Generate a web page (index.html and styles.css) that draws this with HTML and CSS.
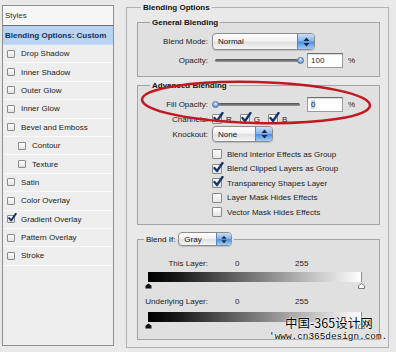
FILE: index.html
```html
<!DOCTYPE html>
<html lang="en">
<head>
    <meta charset="UTF-8">
    <meta name="viewport" content="width=device-width, initial-scale=1.0">
    <title>Layer Style</title>
    <link rel="stylesheet" href="styles.css">
</head>
<body>

<div class="window">
    <!-- daftar style di kiri -->
    <div class="styles-panel">
        <div class="styles-head">Styles</div>
        <div class="styles-item active">Blending Options: Custom</div>
        <div class="styles-item"><span class="cb"></span>Drop Shadow</div>
        <div class="styles-item"><span class="cb"></span>Inner Shadow</div>
        <div class="styles-item"><span class="cb"></span>Outer Glow</div>
        <div class="styles-item"><span class="cb"></span>Inner Glow</div>
        <div class="styles-item"><span class="cb"></span>Bevel and Emboss</div>
        <div class="styles-item sub"><span class="cb"></span>Contour</div>
        <div class="styles-item sub"><span class="cb"></span>Texture</div>
        <div class="styles-item"><span class="cb"></span>Satin</div>
        <div class="styles-item"><span class="cb"></span>Color Overlay</div>
        <div class="styles-item"><span class="cb on"><svg class="tick" width="10" height="10" viewBox="0 0 12 12"><path d="M2.5 6 L5 9 L10.5 1" /></svg></span>Gradient Overlay</div>
        <div class="styles-item"><span class="cb"></span>Pattern Overlay</div>
        <div class="styles-item"><span class="cb"></span>Stroke</div>
    </div>

    <!-- panel blending options -->
    <fieldset class="box outer">
        <legend>Blending Options</legend>

        <fieldset class="box group general">
            <legend>General Blending</legend>
            <div class="row">
                <span class="lbl">Blend Mode:</span>
                <div class="popup popup-mode">
                    <span class="popup-text">Normal</span>
                    <span class="popup-arrows"><svg width="7" height="10" viewBox="0 0 7 10"><path d="M0.5 4 L3.5 0.5 L6.5 4 Z M0.5 6 L3.5 9.5 L6.5 6 Z" /></svg></span>
                </div>
            </div>
            <div class="row">
                <span class="lbl">Opacity:</span>
                <div class="slider full">
                    <span class="track"></span><span class="knob"></span>
                </div>
                <div class="num">100</div>
                <span class="pct">%</span>
            </div>
        </fieldset>

        <fieldset class="box group advanced">
            <legend>Advanced Blending</legend>
            <div class="row fill-row">
                <span class="lbl">Fill Opacity:</span>
                <div class="slider empty">
                    <span class="knob"></span><span class="track"></span>
                </div>
                <div class="num"><span class="sel">0</span></div>
                <span class="pct">%</span>
            </div>
            <div class="row chan-row">
                <span class="lbl">Channels:</span>
                <span class="chan"><span class="cbx"><svg class="tick" width="12" height="12" viewBox="0 0 12 12"><path d="M2.5 6 L5 9 L10.5 1" /></svg></span>R</span>
                <span class="chan"><span class="cbx"><svg class="tick" width="12" height="12" viewBox="0 0 12 12"><path d="M2.5 6 L5 9 L10.5 1" /></svg></span>G</span>
                <span class="chan"><span class="cbx"><svg class="tick" width="12" height="12" viewBox="0 0 12 12"><path d="M2.5 6 L5 9 L10.5 1" /></svg></span>B</span>
            </div>
            <div class="row knock-row">
                <span class="lbl">Knockout:</span>
                <div class="popup popup-knock">
                    <span class="popup-text">None</span>
                    <span class="popup-arrows"><svg width="7" height="10" viewBox="0 0 7 10"><path d="M0.5 4 L3.5 0.5 L6.5 4 Z M0.5 6 L3.5 9.5 L6.5 6 Z" /></svg></span>
                </div>
            </div>
            <div class="checks">
                <div class="check-row"><span class="cbx"></span>Blend Interior Effects as Group</div>
                <div class="check-row"><span class="cbx"><svg class="tick" width="12" height="12" viewBox="0 0 12 12"><path d="M2.5 6 L5 9 L10.5 1" /></svg></span>Blend Clipped Layers as Group</div>
                <div class="check-row"><span class="cbx"><svg class="tick" width="12" height="12" viewBox="0 0 12 12"><path d="M2.5 6 L5 9 L10.5 1" /></svg></span>Transparency Shapes Layer</div>
                <div class="check-row"><span class="cbx"></span>Layer Mask Hides Effects</div>
                <div class="check-row"><span class="cbx"></span>Vector Mask Hides Effects</div>
            </div>
        </fieldset>

        <fieldset class="box group blendif">
            <legend>
                <span class="legend-row">
                    <span class="legend-lbl">Blend If:</span>
                    <span class="popup popup-gray">
                        <span class="popup-text">Gray</span>
                        <span class="popup-arrows"><svg width="6" height="9" viewBox="0 0 7 10"><path d="M0.5 4 L3.5 0.5 L6.5 4 Z M0.5 6 L3.5 9.5 L6.5 6 Z" /></svg></span>
                    </span>
                </span>
            </legend>
            <div class="layer-row">
                <span class="lbl">This Layer:</span>
                <span class="v-lo">0</span>
                <span class="v-hi">255</span>
            </div>
            <div class="ramp">
                <div class="ramp-bar"></div>
                <div class="ramp-thumbs">
                    <svg width="7" height="6" viewBox="0 0 7 6"><path class="th-dark" d="M0.5 5.5 V2.8 L3.5 0.5 L6.5 2.8 V5.5 Z" /></svg>
                    <svg width="7" height="6" viewBox="0 0 7 6"><path class="th-light" d="M0.5 5.5 V2.8 L3.5 0.5 L6.5 2.8 V5.5 Z" /></svg>
                </div>
            </div>
            <div class="layer-row under">
                <span class="lbl">Underlying Layer:</span>
                <span class="v-lo">0</span>
                <span class="v-hi">255</span>
            </div>
            <div class="ramp">
                <div class="ramp-bar"></div>
                <div class="ramp-thumbs">
                    <svg width="7" height="6" viewBox="0 0 7 6"><path class="th-dark" d="M0.5 5.5 V2.8 L3.5 0.5 L6.5 2.8 V5.5 Z" /></svg>
                    <svg width="7" height="6" viewBox="0 0 7 6"><path class="th-light" d="M0.5 5.5 V2.8 L3.5 0.5 L6.5 2.8 V5.5 Z" /></svg>
                </div>
            </div>
        </fieldset>
    </fieldset>
</div>

<!-- lingkaran merah penanda -->
<svg class="mark" width="396" height="352" viewBox="0 0 396 352">
    <ellipse cx="256" cy="102.5" rx="114" ry="20.5" transform="rotate(1.5 256 102.5)" />
</svg>

<div class="watermark">
    <div class="wm-cn">中国-365设计网</div>
    <div class="wm-url">'www.cn365design.com.</div>
</div>

</body>
</html>
```

FILE: styles.css
```css
* {
    box-sizing: border-box;
}
html, body {
    margin: 0;
}
body {
    position: relative;
    width: 396px;
    height: 352px;
    overflow: hidden;
    background-color: #e9e9e9;
    font-family: "Liberation Sans", Arial, sans-serif;
    font-size: 8px;
    color: #1c1c1c;
}
.window {
    display: flex;
    align-items: flex-start;
    padding: 2px 0 0 2px;
}

/* panel kiri */
.styles-panel {
    width: 112px;
    height: 341px;
    margin-top: 3px;
    border: 1px solid #8e8e8e;
    background-color: #eeeeee;
}
.styles-head {
    height: 20px;
    line-height: 19px;
    padding-left: 2px;
    background-color: #f7f7f7;
    border-bottom: 1px solid #6f6f6f;
    color: #333;
}
.styles-item {
    display: flex;
    align-items: center;
    height: 18.4px;
    padding-left: 4px;
    border-bottom: 1px solid #f9f9f9;
    color: #222;
}
.styles-item.active {
    height: 19px;
    padding-left: 2px;
    background-color: #b9d4f2;
    border-bottom: 1px solid #c9def5;
    font-weight: bold;
    color: #13305c;
}
.styles-item.sub {
    padding-left: 15px;
}
.cb {
    position: relative;
    flex: none;
    width: 8px;
    height: 8px;
    margin-right: 6px;
    border: 1px solid #8b8b8b;
    border-radius: 1px;
    background: linear-gradient(#ffffff, #e2e2e2);
}
.cb .tick {
    position: absolute;
    left: -1px;
    top: -3px;
}
.tick path {
    fill: none;
    stroke: #17356c;
    stroke-width: 2.3;
    stroke-linecap: round;
    stroke-linejoin: round;
}

/* group box */
.box {
    margin: 0;
    min-inline-size: 0;
    border: 1px solid #b2b2b2;
}
.box > legend {
    padding: 0 2px;
    line-height: 11px;
    font-weight: bold;
    color: #111;
}
.outer {
    width: 263px;
    margin-left: 12px;
    padding: 4px 8px 7px 10px;
}
.outer > legend {
    margin-left: 4px;
}
.group {
    padding: 0;
    border-color: #a4a4a4;
    background-color: rgba(0, 0, 0, 0.035);
}
.group > legend {
    margin-left: 12px;
}
.general {
    padding: 4px 0 6px;
}
.advanced {
    margin-top: 3px;
    padding: 5px 0 4.5px;
}
.blendif {
    margin-top: 7px;
    padding: 11px 0 9px;
}
.blendif > legend {
    margin-left: 6px;
    font-weight: normal;
}

.row {
    display: flex;
    align-items: center;
    height: 19px;
}
.lbl {
    flex: none;
    width: 70px;
    margin-right: 4px;
    text-align: right;
}

/* popup menu */
.popup {
    display: flex;
    align-items: center;
    height: 17px;
    border: 1px solid #8c8c8c;
    border-radius: 4px;
    background: linear-gradient(#ffffff, #f2f2f2 45%, #e0e0e0 55%, #f5f5f5);
    box-shadow: 0 1px 1px rgba(0, 0, 0, 0.15);
    overflow: hidden;
    font-weight: normal;
}
.popup-text {
    flex: 1;
    padding-left: 5px;
    color: #111;
}
.popup-arrows {
    display: flex;
    align-items: center;
    justify-content: center;
    align-self: stretch;
    width: 17px;
    border-left: 1px solid #5f84b8;
    background: linear-gradient(#c8dffa, #84b3ec 48%, #4c8ee0 52%, #a0ccf7);
}
.popup-arrows path {
    fill: #1b2944;
}
.popup-mode {
    width: 103px;
}
.popup-knock {
    width: 61px;
    height: 16px;
}
.popup-gray {
    width: 54px;
    height: 14px;
}
.popup-gray .popup-arrows {
    width: 15px;
}

/* slider */
.slider {
    display: flex;
    align-items: center;
    width: 92px;
    height: 9px;
}
.slider.full {
    padding-left: 3px;
}
.slider.empty {
    padding-right: 4px;
}
.track {
    flex: 1;
    height: 3px;
    border-radius: 2px;
    background: linear-gradient(#505050, #9a9a9a);
}
.knob {
    flex: none;
    width: 7px;
    height: 7px;
    border: 1px solid #4f6f9c;
    border-radius: 50%;
    background: radial-gradient(circle at 50% 30%, #eef5ff, #75aaea 60%, #3f78c2);
}
.full .knob {
    margin-left: -1px;
}
.empty .knob {
    margin-right: -1px;
}
.num {
    width: 36px;
    height: 15px;
    margin-left: 3px;
    padding-left: 3px;
    line-height: 13px;
    border: 1px solid #9a9a9a;
    border-top-color: #6d6d6d;
    background-color: #fff;
    box-shadow: inset 0 1px 1px rgba(0, 0, 0, 0.15);
}
.sel {
    background-color: #b6d6fd;
}
.pct {
    margin-left: 5px;
}
.fill-row {
    height: 17px;
}

/* checkbox kanan */
.cbx {
    position: relative;
    flex: none;
    width: 10px;
    height: 10px;
    border: 1px solid #8a8a8a;
    border-radius: 1px;
    background: linear-gradient(#ffffff, #e4e4e4);
}
.cbx .tick {
    position: absolute;
    left: -1px;
    top: -3px;
}
.chan-row {
    height: 12px;
}
.chan {
    display: flex;
    align-items: center;
    margin-right: 8px;
}
.chan .cbx {
    margin-right: 4px;
}
.knock-row {
    height: 18px;
}
.checks {
    margin-top: 4px;
    padding-left: 74px;
}
.check-row {
    display: flex;
    align-items: center;
    height: 14.5px;
}
.check-row .cbx {
    margin-right: 5px;
}

/* blend if */
.legend-row {
    display: flex;
    align-items: center;
    gap: 3px;
    height: 14px;
}
.layer-row {
    display: flex;
    align-items: center;
    height: 12px;
}
.layer-row.under {
    margin-top: 5px;
}
.v-lo {
    width: 60px;
    margin-left: 23px;
}
.ramp {
    width: 214px;
    margin: 3px 0 0 10px;
}
.layer-row.under + .ramp {
    margin-top: 5px;
}
.ramp-bar {
    height: 10px;
    border-right: 1px solid #8a8a8a;
    background: linear-gradient(to right, #000000 0%, #141414 12%, #ffffff 100%);
}
.ramp-thumbs {
    display: flex;
    justify-content: space-between;
    height: 8px;
    margin: 0 -3px;
    padding-top: 1px;
}
.th-dark {
    fill: #111;
}
.th-light {
    fill: #fff;
    stroke: #7a7a7a;
    stroke-width: 1;
}

/* penanda & watermark */
.mark {
    position: absolute;
    left: 0;
    top: 0;
    pointer-events: none;
}
.mark ellipse {
    fill: none;
    stroke: #c2181f;
    stroke-width: 2.5;
}
.watermark {
    position: absolute;
    left: 269px;
    top: 314px;
    color: #000;
    text-shadow: 0 0 1px #fff, 0 0 1px #fff, 0 0 2px #fff;
}
.wm-cn {
    padding-left: 16px;
    line-height: 17px;
    font-family: "Noto Sans CJK SC", sans-serif;
    font-size: 12.5px;
}
.wm-url {
    line-height: 12px;
    font-family: "Liberation Mono", monospace;
    font-size: 9.4px;
    white-space: nowrap;
}
```
